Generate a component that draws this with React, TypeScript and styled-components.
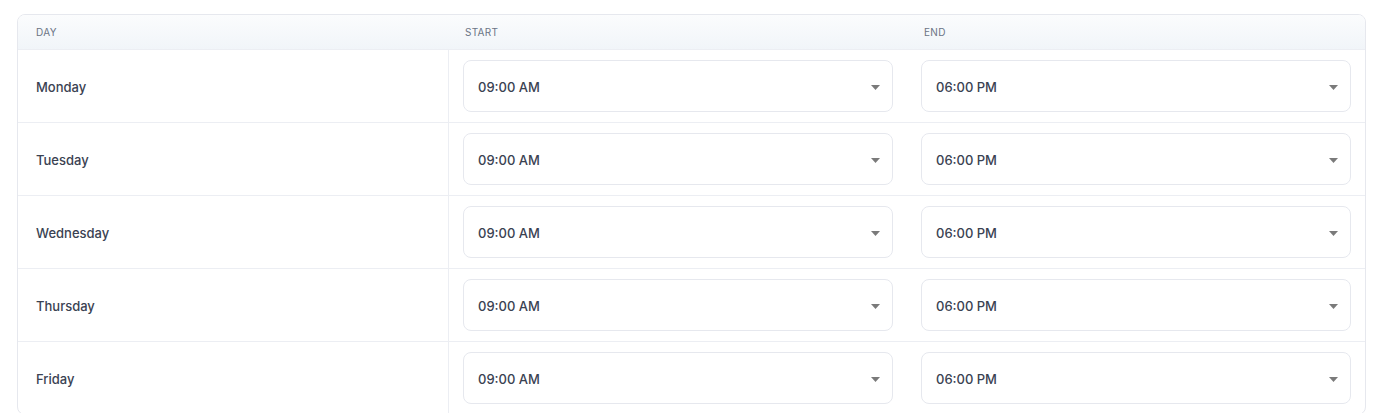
import styled, { createGlobalStyle } from "styled-components";

const GlobalStyle = createGlobalStyle`
  body {
    margin: 0;
    background: #ffffff;
    font-family: Inter, "Noto Sans", sans-serif;
  }
`;

const days = ["Monday", "Tuesday", "Wednesday", "Thursday", "Friday"];

const Caret = () => (
  <svg width="9" height="5" viewBox="0 0 9 5">
    <path d="M0 0h9L4.5 5z" fill="#7a7a7a" />
  </svg>
);

const TimeSelect = ({ value }: { value: string }) => (
  <Select>
    <span>{value}</span>
    <Caret />
  </Select>
);

const App = () => {
  return (
    <Page>
      <GlobalStyle />
      <Card>
        <HeaderRow>
          <HeadCell>Day</HeadCell>
          <HeadCell>Start</HeadCell>
          <HeadCell>End</HeadCell>
        </HeaderRow>
        {days.map((day) => (
          <Row key={day}>
            <DayCell>{day}</DayCell>
            <SelectCell $divider>
              <TimeSelect value="09:00 AM" />
            </SelectCell>
            <SelectCell>
              <TimeSelect value="06:00 PM" />
            </SelectCell>
          </Row>
        ))}
      </Card>
    </Page>
  );
};

const Page = styled.div`
  padding: 14px 9px 0 17px;
`;

const Card = styled.div`
  border: 1px solid #e6e8ee;
  border-radius: 8px;
  overflow: hidden;
  background: #fff;
`;

const HeaderRow = styled.div`
  display: grid;
  grid-template-columns: 430fr 459fr 458fr;
  height: 34px;
  align-items: center;
  background: linear-gradient(180deg, #fbfcfd 0%, #f1f5f9 100%);
`;

const HeadCell = styled.div`
  padding-left: 18px;
  font-size: 10px;
  letter-spacing: 0.3px;
  text-transform: uppercase;
  color: #6b7485;
  &:nth-child(2),
  &:nth-child(3) {
    padding-left: 17px;
  }
`;

const Row = styled.div`
  display: grid;
  grid-template-columns: 430fr 459fr 458fr;
  height: 72px;
  border-top: 1px solid #eceef3;
`;

const DayCell = styled.div`
  display: flex;
  align-items: center;
  padding: 1px 0 0 18px;
  font-size: 13px;
  font-weight: 500;
  color: #3a4252;
`;

const SelectCell = styled.div<{ $divider?: boolean }>`
  display: flex;
  align-items: center;
  padding: 0 14px;
  border-left: ${(p) => (p.$divider ? "1px solid #eceef3" : "none")};
`;

const Select = styled.div`
  flex: 1;
  height: 52px;
  box-sizing: border-box;
  border: 1px solid #e6e8ee;
  border-radius: 8px;
  display: flex;
  align-items: center;
  justify-content: space-between;
  padding: 2px 12px 0 14px;
  font-size: 13px;
  font-weight: 500;
  color: #3a4252;
`;

export default App;
